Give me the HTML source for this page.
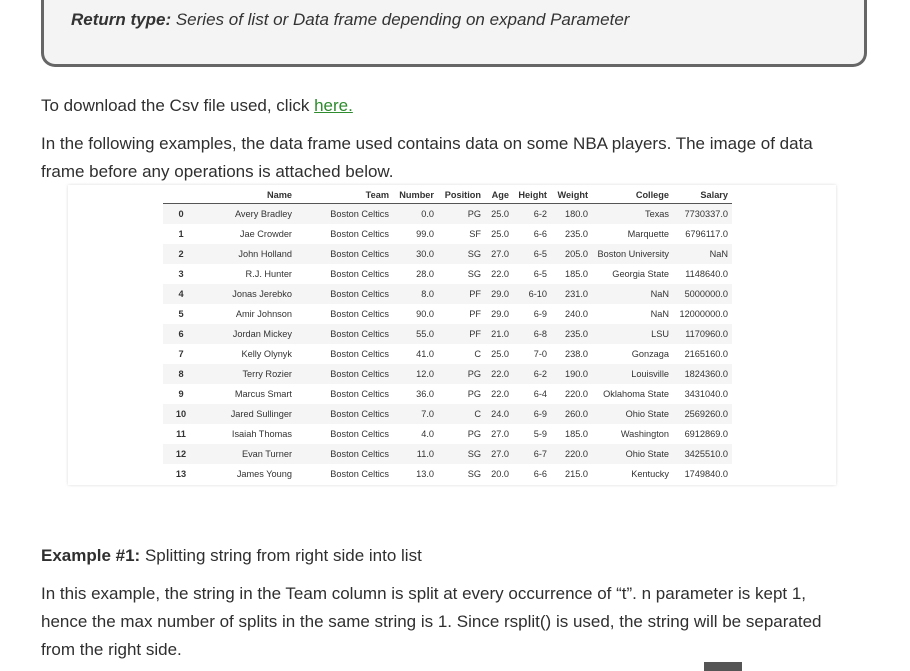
<!DOCTYPE html><html><head><style>
body{margin:0;width:910px;height:671px;overflow:hidden;background:#fff;font-family:"Liberation Sans",sans-serif;color:#333}
.box{position:absolute;left:41px;top:-20px;width:820px;height:84px;background:#f4f4f4;border:3px solid #666;border-top:none;border-radius:0 0 14px 14px}
.p{position:absolute;left:41px;font-size:17px;line-height:28px;color:#2f2f2f;white-space:nowrap}
a{color:#2e8b2e}
.img{position:absolute;left:68px;top:185px;width:768px;height:300px;background:#fff;box-shadow:0 0 3px rgba(0,0,0,.15)}
table{position:absolute;left:95px;top:1px;border-collapse:collapse;font-size:9.2px;color:#333}
td,th{height:20px;padding:0;text-align:right}
th{font-weight:bold;height:17px;border-bottom:1px solid #555}
tr:nth-child(even) td{background:#f5f5f5}
td:first-child{text-align:center;font-weight:bold}
</style></head><body>
<div class="box"><div style="position:absolute;left:27px;top:30px;font-size:17px;font-style:italic;color:#333"><b>Return type:</b> Series of list or Data frame depending on expand Parameter</div></div>
<div class="p" style="top:92px">To download the Csv file used, click <a href="#">here.</a></div>
<div class="p" style="top:130px">In the following examples, the data frame used contains data on some NBA players. The image of data<br>frame before any operations is attached below.</div>
<div class="img"><table>
<colgroup><col style="width:36px"><col style="width:93px"><col style="width:97px"><col style="width:45px"><col style="width:47px"><col style="width:28px"><col style="width:38px"><col style="width:41px"><col style="width:81px"><col style="width:59px"><col style="width:4px"></colgroup>
<tr><th></th><th>Name</th><th>Team</th><th>Number</th><th>Position</th><th>Age</th><th>Height</th><th>Weight</th><th>College</th><th>Salary</th><th></th></tr>
<tr><td>0</td><td>Avery Bradley</td><td>Boston Celtics</td><td>0.0</td><td>PG</td><td>25.0</td><td>6-2</td><td>180.0</td><td>Texas</td><td>7730337.0</td><td></td></tr>
<tr><td>1</td><td>Jae Crowder</td><td>Boston Celtics</td><td>99.0</td><td>SF</td><td>25.0</td><td>6-6</td><td>235.0</td><td>Marquette</td><td>6796117.0</td><td></td></tr>
<tr><td>2</td><td>John Holland</td><td>Boston Celtics</td><td>30.0</td><td>SG</td><td>27.0</td><td>6-5</td><td>205.0</td><td>Boston University</td><td>NaN</td><td></td></tr>
<tr><td>3</td><td>R.J. Hunter</td><td>Boston Celtics</td><td>28.0</td><td>SG</td><td>22.0</td><td>6-5</td><td>185.0</td><td>Georgia State</td><td>1148640.0</td><td></td></tr>
<tr><td>4</td><td>Jonas Jerebko</td><td>Boston Celtics</td><td>8.0</td><td>PF</td><td>29.0</td><td>6-10</td><td>231.0</td><td>NaN</td><td>5000000.0</td><td></td></tr>
<tr><td>5</td><td>Amir Johnson</td><td>Boston Celtics</td><td>90.0</td><td>PF</td><td>29.0</td><td>6-9</td><td>240.0</td><td>NaN</td><td>12000000.0</td><td></td></tr>
<tr><td>6</td><td>Jordan Mickey</td><td>Boston Celtics</td><td>55.0</td><td>PF</td><td>21.0</td><td>6-8</td><td>235.0</td><td>LSU</td><td>1170960.0</td><td></td></tr>
<tr><td>7</td><td>Kelly Olynyk</td><td>Boston Celtics</td><td>41.0</td><td>C</td><td>25.0</td><td>7-0</td><td>238.0</td><td>Gonzaga</td><td>2165160.0</td><td></td></tr>
<tr><td>8</td><td>Terry Rozier</td><td>Boston Celtics</td><td>12.0</td><td>PG</td><td>22.0</td><td>6-2</td><td>190.0</td><td>Louisville</td><td>1824360.0</td><td></td></tr>
<tr><td>9</td><td>Marcus Smart</td><td>Boston Celtics</td><td>36.0</td><td>PG</td><td>22.0</td><td>6-4</td><td>220.0</td><td>Oklahoma State</td><td>3431040.0</td><td></td></tr>
<tr><td>10</td><td>Jared Sullinger</td><td>Boston Celtics</td><td>7.0</td><td>C</td><td>24.0</td><td>6-9</td><td>260.0</td><td>Ohio State</td><td>2569260.0</td><td></td></tr>
<tr><td>11</td><td>Isaiah Thomas</td><td>Boston Celtics</td><td>4.0</td><td>PG</td><td>27.0</td><td>5-9</td><td>185.0</td><td>Washington</td><td>6912869.0</td><td></td></tr>
<tr><td>12</td><td>Evan Turner</td><td>Boston Celtics</td><td>11.0</td><td>SG</td><td>27.0</td><td>6-7</td><td>220.0</td><td>Ohio State</td><td>3425510.0</td><td></td></tr>
<tr><td>13</td><td>James Young</td><td>Boston Celtics</td><td>13.0</td><td>SG</td><td>20.0</td><td>6-6</td><td>215.0</td><td>Kentucky</td><td>1749840.0</td><td></td></tr>
</table></div>
<div class="p" style="top:542px"><b>Example #1:</b> Splitting string from right side into list</div>
<div class="p" style="top:580px">In this example, the string in the Team column is split at every occurrence of “t”. n parameter is kept 1,<br>hence the max number of splits in the same string is 1. Since rsplit() is used, the string will be separated<br>from the right side.</div>
<div style="position:absolute;left:704px;top:662px;width:38px;height:9px;background:#555"></div>
</body></html>
